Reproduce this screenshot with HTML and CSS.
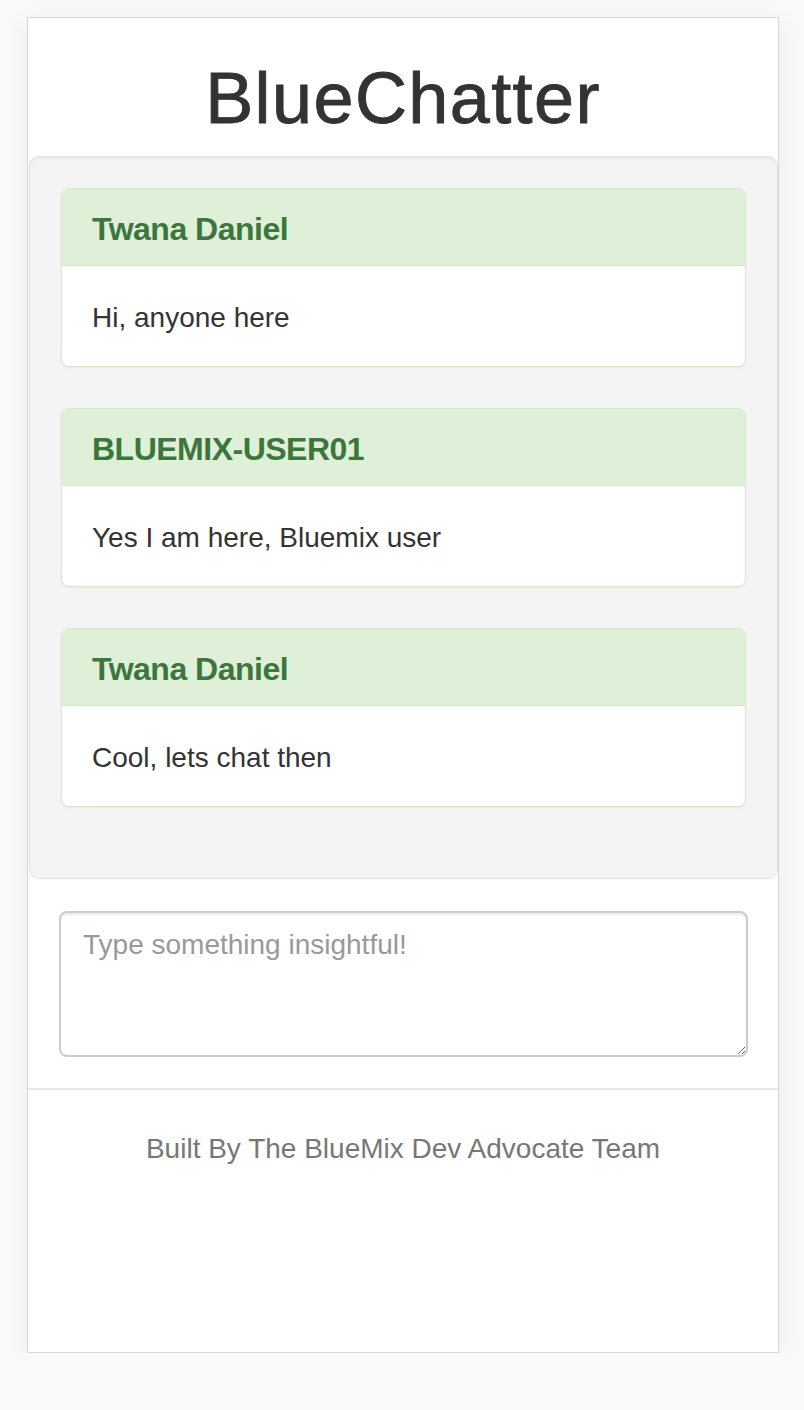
FILE: index.html
```html
<!DOCTYPE html>
<html lang="en">
<head>
<meta charset="utf-8">
<title>BlueChatter</title>
<link rel="stylesheet" href="styles.css">
</head>
<body>
<div class="frame">
  <h1 class="title">BlueChatter</h1>
  <div class="well">
    <div class="panel">
      <div class="panel-heading"><h3 class="panel-title">Twana Daniel</h3></div>
      <div class="panel-body">Hi, anyone here</div>
    </div>
    <div class="panel">
      <div class="panel-heading"><h3 class="panel-title">BLUEMIX-USER01</h3></div>
      <div class="panel-body">Yes I am here, Bluemix user</div>
    </div>
    <div class="panel">
      <div class="panel-heading"><h3 class="panel-title">Twana Daniel</h3></div>
      <div class="panel-body">Cool, lets chat then</div>
    </div>
  </div>
  <div class="composer">
    <textarea class="message-input" placeholder="Type something insightful!"></textarea>
  </div>
  <hr class="rule">
  <p class="footer">Built By The BlueMix Dev Advocate Team</p>
</div>
</body>
</html>
```

FILE: styles.css
```css
html, body {
  margin: 0;
  padding: 0;
}

body {
  background: #f9f9f9;
  font-family: "Liberation Sans", Arial, Helvetica, sans-serif;
  color: #333;
  font-size: 28px;
  line-height: 40px;
}

.frame {
  box-sizing: border-box;
  margin: 17px 0 0 27px;
  width: 752px;
  height: 1336px;
  background: #fff;
  border: 1px solid #d6d6d6;
  box-shadow: 0 4px 24px rgba(0, 0, 0, 0.06);
}

.title {
  margin: 41px 0 18px;
  font-size: 72px;
  line-height: 79px;
  font-weight: 400;
  letter-spacing: 1.4px;
  -webkit-text-stroke: 0.9px #333;
  text-align: center;
  color: #333;
}

.well {
  box-sizing: border-box;
  margin: 0 0 0 1px;
  padding: 31px;
  background: #f4f4f4;
  border: 1px solid #e3e3e3;
  border-radius: 10px;
  box-shadow: inset 0 2px 2px rgba(0, 0, 0, 0.05);
}

.panel {
  background: #fff;
  border: 1px solid #d6e9c6;
  border-radius: 8px;
  box-shadow: 0 1px 2px rgba(0, 0, 0, 0.05);
  margin-bottom: 41px;
  overflow: hidden;
}

.panel:last-child {
  margin-bottom: 40px;
}

.panel-heading {
  background: #dff0d8;
  border-bottom: 1px solid #d6e9c6;
  padding: 22px 30px 18px;
}

.panel-title {
  margin: 0;
  font-size: 32px;
  line-height: 36px;
  font-weight: 700;
  letter-spacing: -0.5px;
  color: #3c763d;
}

.panel-body {
  padding: 32px 30px 28px;
  color: #333;
}

.composer {
  padding: 32px 30px 0 31px;
}

.message-input {
  display: block;
  box-sizing: border-box;
  width: 100%;
  height: 146px;
  margin: 0;
  padding: 12px 22px 10px;
  border: 2px solid #ccc;
  border-radius: 8px;
  box-shadow: inset 0 2px 2px rgba(0, 0, 0, 0.075);
  font-family: "Liberation Sans", Arial, Helvetica, sans-serif;
  font-size: 28px;
  line-height: 40px;
  color: #555;
  background: #fff;
  resize: vertical;
}

.message-input::placeholder {
  color: #999;
}

.rule {
  margin: 31px 0 0;
  border: 0;
  border-top: 2px solid #e6e6e6;
  height: 0;
}

.footer {
  margin: 39px 0 0;
  text-align: center;
  color: #777;
  font-size: 28px;
  line-height: 40px;
}
```
